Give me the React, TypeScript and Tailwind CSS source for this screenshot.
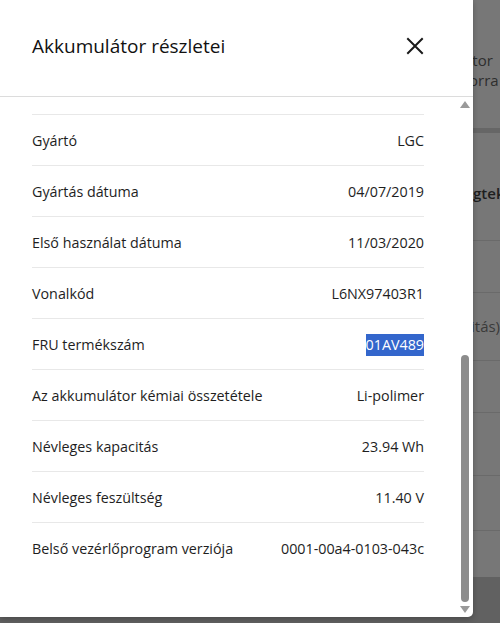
import React from "react";

const rows: [string, string, boolean?][] = [
  ["Gyártó", "LGC"],
  ["Gyártás dátuma", "04/07/2019"],
  ["Első használat dátuma", "11/03/2020"],
  ["Vonalkód", "L6NX97403R1"],
  ["FRU termékszám", "01AV489", true],
  ["Az akkumulátor kémiai összetétele", "Li-polimer"],
  ["Névleges kapacitás", "23.94 Wh"],
  ["Névleges feszültség", "11.40 V"],
  ["Belső vezérlőprogram verziója", "0001-00a4-0103-043c"],
];

export default function App() {
  const font = { fontFamily: '"Open Sans", "Noto Sans", sans-serif' };
  return (
    <div className="relative w-[500px] h-[623px] overflow-hidden bg-[#777777]" style={font}>
      {/* dimmed background page */}
      <div className="flex flex-col pl-[473px] text-[15px] text-[#2e2e2e] leading-[20px] h-full overflow-hidden">
        <div className="h-[50px] shrink-0" />
        <div className="ml-[-9px] whitespace-nowrap overflow-hidden">átor</div>
        <div className="ml-[-4px] whitespace-nowrap overflow-hidden">orra</div>
        <div className="h-[38px] shrink-0" />
        <div className="h-[5px] bg-[#666666] shrink-0" />
        <div className="h-[50px] shrink-0" />
        <div className="whitespace-nowrap overflow-hidden font-semibold text-[#1e1e1e]">gtek</div>
        <div className="h-[37px] shrink-0" />
        <div className="h-px bg-[#6a6a6a] shrink-0" />
        <div className="h-[51px] shrink-0" />
        <div className="h-px bg-[#6a6a6a] shrink-0" />
        <div className="h-[23px] shrink-0" />
        <div className="whitespace-nowrap overflow-hidden ml-[-2px] text-[#3a3a3a]">itás)</div>
        <div className="h-[24px] shrink-0" />
        <div className="h-px bg-[#6a6a6a] shrink-0" />
        <div className="h-[51px] shrink-0" />
        <div className="h-px bg-[#6a6a6a] shrink-0" />
        <div className="h-[62px] shrink-0" />
        <div className="h-px bg-[#6a6a6a] shrink-0" />
        <div className="h-[54px] shrink-0" />
        <div className="h-px bg-[#6a6a6a] shrink-0" />
        <div className="h-[46px] shrink-0" />
        <div className="flex-1 bg-[#616161] -ml-[473px]" />
      </div>

      {/* dialog */}
      <div className="absolute left-0 top-0 w-[473px] h-[617px] bg-white rounded-br-[5px] flex flex-col shadow-[0_2px_6px_rgba(0,0,0,0.25)]">
        <div className="h-[97px] flex items-center justify-between pl-[32px] pr-[49px] border-b border-[#dcdcdc] shrink-0">
          <div className="text-[19px] text-[#111111] pb-[4px]">Akkumulátor részletei</div>
          <svg width="18" height="18" viewBox="0 0 18 18" className="mb-[4px]">
            <path d="M2 2 L16 16 M16 2 L2 16" stroke="#1a1a1a" strokeWidth="2" strokeLinecap="square" />
          </svg>
        </div>
        <div className="flex flex-1 min-h-0">
          <div className="flex-1 pl-[32px] pr-[33px] pt-[17px]">
            {rows.map(([label, value, sel]) => (
              <div
                key={label}
                className="h-[51px] border-t border-[#e8e8e8] flex items-center justify-between text-[14.3px] text-[#1e1e1e] pt-[2px]"
              >
                <span>{label}</span>
                {sel ? (
                  <span className="bg-[#3366cc] text-white leading-[22px]">{value}</span>
                ) : (
                  <span>{value}</span>
                )}
              </div>
            ))}
          </div>
          {/* scrollbar */}
          <div className="w-[16px] flex flex-col items-center pt-[4px] pb-[4px]">
            <svg width="10" height="7" viewBox="0 0 10 7">
              <path d="M5 0 L10 7 L0 7 Z" fill="#9a9a9a" />
            </svg>
            <div className="flex-1 w-[8px] flex flex-col pt-[247px] pb-[4px]">
              <div className="flex-1 bg-[#8c8c8c] rounded-full" />
            </div>
            <svg width="10" height="7" viewBox="0 0 10 7">
              <path d="M0 0 L10 0 L5 7 Z" fill="#9a9a9a" />
            </svg>
          </div>
        </div>
      </div>
    </div>
  );
}
